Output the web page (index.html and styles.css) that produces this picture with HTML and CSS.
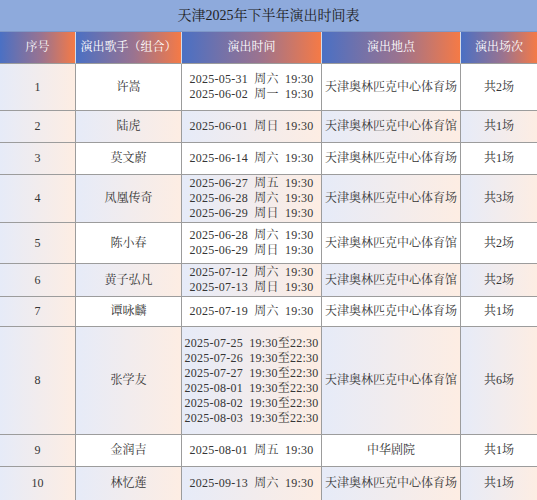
FILE: index.html
```html
<!DOCTYPE html>
<html lang="zh-CN">
<head>
<meta charset="utf-8">
<title>天津2025年下半年演出时间表</title>
<link rel="stylesheet" href="styles.css">
</head>
<body>
<div class="sheet">
  <div class="c title">天津2025年下半年演出时间表</div>

  <div class="c hd">序号</div>
  <div class="c hd">演出歌手（组合）</div>
  <div class="c hd">演出时间</div>
  <div class="c hd">演出地点</div>
  <div class="c hd">演出场次</div>

  <div class="c g">1</div>
  <div class="c">许嵩</div>
  <div class="c t"><div>2025-05-31 周六 19:30</div><div>2025-06-02 周一 19:30</div></div>
  <div class="c">天津奥林匹克中心体育场</div>
  <div class="c">共2场</div>

  <div class="c g">2</div>
  <div class="c g">陆虎</div>
  <div class="c g t"><div>2025-06-01 周日 19:30</div></div>
  <div class="c g">天津奥林匹克中心体育馆</div>
  <div class="c g">共1场</div>

  <div class="c g">3</div>
  <div class="c">莫文蔚</div>
  <div class="c t"><div>2025-06-14 周六 19:30</div></div>
  <div class="c">天津奥林匹克中心体育场</div>
  <div class="c">共1场</div>

  <div class="c g">4</div>
  <div class="c g">凤凰传奇</div>
  <div class="c g t"><div>2025-06-27 周五 19:30</div><div>2025-06-28 周六 19:30</div><div>2025-06-29 周日 19:30</div></div>
  <div class="c g">天津奥林匹克中心体育场</div>
  <div class="c g">共3场</div>

  <div class="c g">5</div>
  <div class="c">陈小春</div>
  <div class="c t"><div>2025-06-28 周六 19:30</div><div>2025-06-29 周日 19:30</div></div>
  <div class="c">天津奥林匹克中心体育馆</div>
  <div class="c">共2场</div>

  <div class="c g">6</div>
  <div class="c g">黄子弘凡</div>
  <div class="c g t"><div>2025-07-12 周六 19:30</div><div>2025-07-13 周日 19:30</div></div>
  <div class="c g">天津奥林匹克中心体育馆</div>
  <div class="c g">共2场</div>

  <div class="c g">7</div>
  <div class="c">谭咏麟</div>
  <div class="c t"><div>2025-07-19 周六 19:30</div></div>
  <div class="c">天津奥林匹克中心体育场</div>
  <div class="c">共1场</div>

  <div class="c g">8</div>
  <div class="c g">张学友</div>
  <div class="c g t"><div>2025-07-25 19:30至22:30</div><div>2025-07-26 19:30至22:30</div><div>2025-07-27 19:30至22:30</div><div>2025-08-01 19:30至22:30</div><div>2025-08-02 19:30至22:30</div><div>2025-08-03 19:30至22:30</div></div>
  <div class="c g">天津奥林匹克中心体育馆</div>
  <div class="c g">共6场</div>

  <div class="c g">9</div>
  <div class="c">金润吉</div>
  <div class="c t"><div>2025-08-01 周五 19:30</div></div>
  <div class="c">中华剧院</div>
  <div class="c">共1场</div>

  <div class="c g">10</div>
  <div class="c g">林忆莲</div>
  <div class="c g t"><div>2025-09-13 周六 19:30</div></div>
  <div class="c g">天津奥林匹克中心体育场</div>
  <div class="c g">共1场</div>
</div>
</body>
</html>
```

FILE: styles.css
```css
html, body {
  margin: 0;
  padding: 0;
  background: #ffffff;
}

.sheet {
  width: 537px;
  height: 500px;
  display: grid;
  grid-template-columns: 76px 106px 140px 139px 76px;
  grid-template-rows: 32px 32px 47px 32px 32px 48px 41px 33px 30px 108px 32px 33px;
  font-family: "Liberation Serif", "Noto Serif CJK SC", "Noto Sans CJK SC", serif;
  font-size: 12px;
  line-height: 15px;
  color: #353535;
  overflow: hidden;
}

.c {
  box-sizing: border-box;
  display: flex;
  flex-direction: column;
  align-items: center;
  justify-content: center;
  text-align: center;
  border-right: 1px solid #9c9c9c;
  border-bottom: 1px solid #9c9c9c;
  white-space: nowrap;
}

.c:nth-child(5n+1) {
  border-right: none;
}

.c:nth-last-child(-n+5) {
  border-bottom: none;
}

.title {
  grid-column: 1 / -1;
  background: #8eaadc;
  color: #1e1e1e;
  font-size: 14px;
  border-bottom: 1px solid #7f98c8;
}

.hd {
  background: linear-gradient(to right, #4a70c4, #9a7390 55%, #f57a46);
  color: #ffffff;
  border-right: 1px solid #d7dbe6;
  border-bottom: 1px solid #9c9c9c;
}

.g {
  background: linear-gradient(to right, #e6ebf8, #fdede3);
}

.t {
  word-spacing: 3px;
  letter-spacing: 0.25px;
}
```
